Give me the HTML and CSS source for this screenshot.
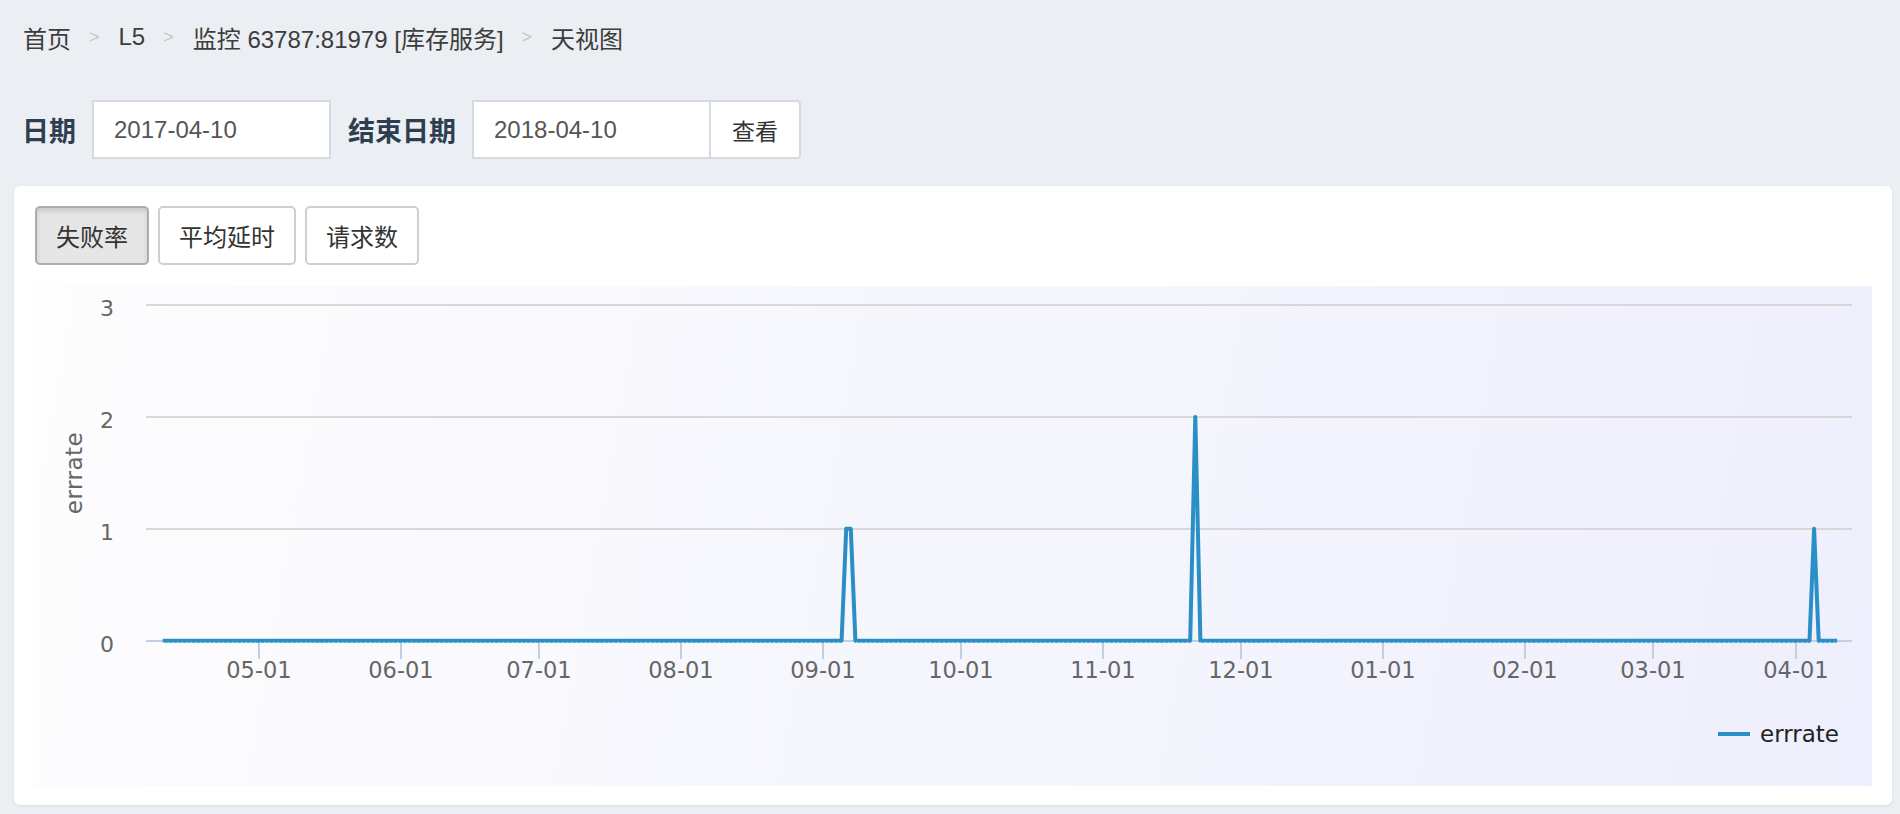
FILE: index.html
```html
<!DOCTYPE html>
<html lang="zh-CN">
<head>
    <meta charset="UTF-8">
    <title>天视图</title>
    <link rel="stylesheet" href="styles.css">
</head>
<body>
    <div class="page">
        <div class="breadcrumb">
            <a href="#">首页</a><span class="sep">&gt;</span>
            <a href="#">L5</a><span class="sep">&gt;</span>
            <a href="#">监控 63787:81979 [库存服务]</a><span class="sep">&gt;</span>
            <span class="current">天视图</span>
        </div>

        <form class="date-bar">
            <label for="startDate">日期</label>
            <input type="text" id="startDate" class="date-input" value="2017-04-10">
            <label for="endDate">结束日期</label>
            <div class="input-group">
                <input type="text" id="endDate" class="date-input" value="2018-04-10">
                <button type="button" class="btn-view">查看</button>
            </div>
        </form>

        <div class="card">
            <div class="tabs">
                <button type="button" class="tab active">失败率</button>
                <button type="button" class="tab">平均延时</button>
                <button type="button" class="tab">请求数</button>
            </div>

            <div class="chart">
                <svg width="1839" height="500" viewBox="0 0 1839 500">
                    <!-- grid -->
                    <g class="grid">
                        <line x1="113" y1="19" x2="1819" y2="19"/>
                        <line x1="113" y1="131" x2="1819" y2="131"/>
                        <line x1="113" y1="243" x2="1819" y2="243"/>
                    </g>
                    <g class="y-labels">
                        <text x="81" y="30">3</text>
                        <text x="81" y="142">2</text>
                        <text x="81" y="254">1</text>
                        <text x="81" y="366">0</text>
                    </g>
                    <text class="axis-title" transform="translate(49 187) rotate(-90)">errrate</text>

                    <!-- x axis -->
                    <line class="axis" x1="113" y1="355" x2="1819" y2="355"/>
                    <g class="ticks">
                        <line x1="226" y1="355" x2="226" y2="373"/>
                        <line x1="368" y1="355" x2="368" y2="373"/>
                        <line x1="506" y1="355" x2="506" y2="373"/>
                        <line x1="648" y1="355" x2="648" y2="373"/>
                        <line x1="790" y1="355" x2="790" y2="373"/>
                        <line x1="928" y1="355" x2="928" y2="373"/>
                        <line x1="1070" y1="355" x2="1070" y2="373"/>
                        <line x1="1208" y1="355" x2="1208" y2="373"/>
                        <line x1="1350" y1="355" x2="1350" y2="373"/>
                        <line x1="1492" y1="355" x2="1492" y2="373"/>
                        <line x1="1620" y1="355" x2="1620" y2="373"/>
                        <line x1="1763" y1="355" x2="1763" y2="373"/>
                    </g>
                    <g class="x-labels">
                        <text x="226" y="392">05-01</text>
                        <text x="368" y="392">06-01</text>
                        <text x="506" y="392">07-01</text>
                        <text x="648" y="392">08-01</text>
                        <text x="790" y="392">09-01</text>
                        <text x="928" y="392">10-01</text>
                        <text x="1070" y="392">11-01</text>
                        <text x="1208" y="392">12-01</text>
                        <text x="1350" y="392">01-01</text>
                        <text x="1492" y="392">02-01</text>
                        <text x="1620" y="392">03-01</text>
                        <text x="1763" y="392">04-01</text>
                    </g>

                    <!-- series -->
                    <path class="series" d="M129.7 354.7 L808.6 354.7 L813.2 242.8 L817.8 242.8 L822.4 354.7 L1157.2 354.7 L1162.3 130.9 L1167.4 354.7 L1776.5 354.7 L1781.1 242.8 L1785.7 354.7 L1804.1 354.7"/>
                    <line class="series-dots" x1="130" y1="356.4" x2="1804" y2="356.4"/>

                    <!-- legend -->
                    <line class="legend-line" x1="1685" y1="448" x2="1717" y2="448"/>
                    <text class="legend-text" x="1727" y="456">errrate</text>
                </svg>
            </div>
        </div>
    </div>
</body>
</html>
```

FILE: styles.css
```css
body {
    margin: 0;
    background: #ebeef3;
    font-family: "Liberation Sans", "Noto Sans CJK SC", sans-serif;
    color: #333;
}
.page {
    padding: 21px 8px 8px 14px;
}
.breadcrumb {
    display: flex;
    align-items: center;
    height: 32px;
    padding-left: 9px;
    font-size: 24px;
}
.breadcrumb a,
.breadcrumb .current {
    color: #3d3d3d;
    text-decoration: none;
}
.breadcrumb .sep {
    color: #c6c6c6;
    font-size: 18px;
    padding: 0 19px 0 18px;
}
.date-bar {
    display: flex;
    align-items: center;
    margin: 47px 0 0 8px;
}
.date-bar label {
    font-size: 27px;
    font-weight: bold;
    color: #2c3e50;
    margin-right: 16px;
}
.date-input {
    box-sizing: border-box;
    width: 239px;
    height: 59px;
    padding: 0 20px;
    border: 2px solid #d5d9e0;
    background: #fff;
    font-family: "Liberation Sans", sans-serif;
    font-size: 24px;
    color: #555;
    outline: none;
    margin-right: 17px;
}
.input-group {
    display: flex;
}
.input-group .date-input {
    margin-right: 0;
}
.btn-view {
    box-sizing: border-box;
    width: 90px;
    height: 59px;
    border: 2px solid #d5d9e0;
    border-left: none;
    border-radius: 0 4px 4px 0;
    background: #fff;
    font-family: "Noto Sans CJK SC", sans-serif;
    font-size: 23px;
    color: #333;
    cursor: pointer;
}
.card {
    margin-top: 27px;
    background: #fff;
    border-radius: 6px;
    box-shadow: 0 1px 3px rgba(0, 0, 0, 0.08);
    padding: 20px 20px 19px 19px;
}
.tabs {
    display: flex;
    gap: 9px;
    padding-left: 2px;
}
.tab {
    box-sizing: border-box;
    height: 59px;
    padding: 0 19px;
    border: 2px solid #cfcfcf;
    border-radius: 5px;
    background: #fff;
    font-family: "Noto Sans CJK SC", sans-serif;
    font-size: 24px;
    color: #333;
    cursor: pointer;
}
.tab.active {
    background: #e6e6e6;
    border-color: #adadad;
    box-shadow: inset 0 3px 5px rgba(0, 0, 0, 0.125);
}
.chart {
    margin-top: 21px;
    height: 500px;
    background: linear-gradient(100deg, #fdfdfe 0%, #f5f6fd 50%, #eeeffc 100%);
}
.chart svg {
    display: block;
    font-family: "DejaVu Sans", sans-serif;
}
.grid line {
    stroke: #d8d8d8;
    stroke-width: 2;
}
.y-labels text {
    font-size: 22px;
    fill: #666;
    text-anchor: end;
}
.axis-title {
    font-size: 23px;
    letter-spacing: 0.5px;
    fill: #666;
    text-anchor: middle;
}
.axis,
.ticks line {
    stroke: #c0d0e0;
    stroke-width: 2;
}
.x-labels text {
    font-size: 22.5px;
    fill: #666;
    text-anchor: middle;
}
.series {
    fill: none;
    stroke: #2a8fc4;
    stroke-width: 4;
    stroke-linejoin: round;
}
.series-dots {
    stroke: rgba(255, 255, 255, 0.55);
    stroke-width: 1;
    stroke-dasharray: 1.5 3.09;
}
.legend-line {
    stroke: #2a8fc4;
    stroke-width: 4;
}
.legend-text {
    font-size: 23px;
    fill: #222;
}
```
